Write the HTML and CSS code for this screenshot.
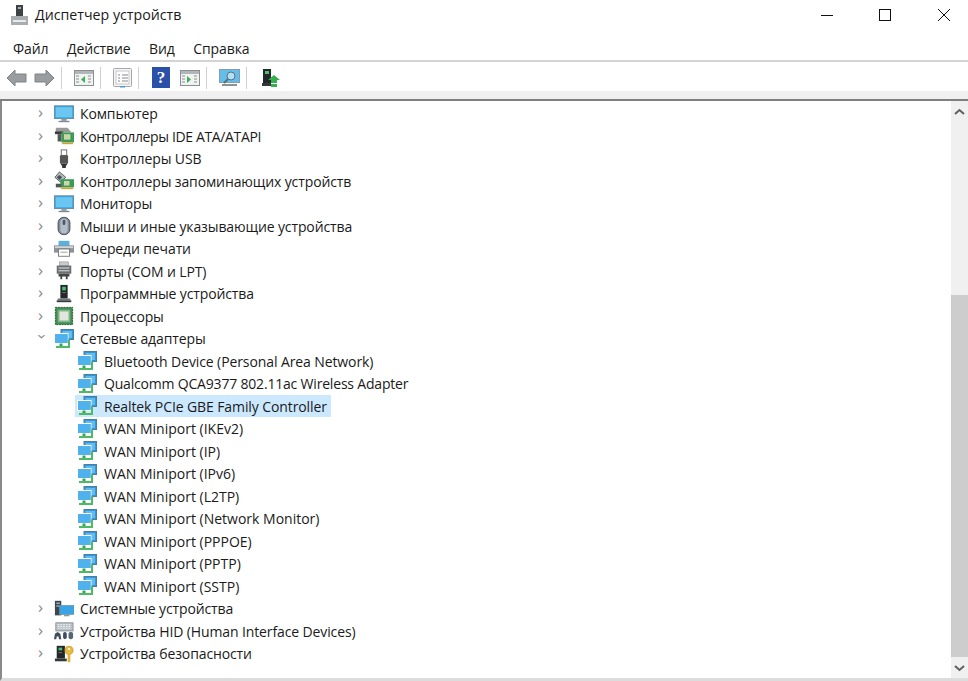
FILE: index.html
```html
<!DOCTYPE html>
<html lang="ru">
<head>
    <meta charset="UTF-8">
    <title>Диспетчер устройств</title>
    <link rel="stylesheet" href="styles.css">
</head>
<body>
    <svg class="sprite" width="0" height="0">
        <symbol id="i-monitor" viewBox="0 0 22 20">
            <rect x="0.5" y="1" width="21" height="14" fill="#35a8e8" stroke="#6d8797"/>
            <rect x="2" y="2.5" width="18" height="11" fill="#6cc6f2"/>
            <rect x="8" y="15" width="6" height="2.5" fill="#8b9aa3"/>
            <rect x="5" y="17.5" width="12" height="1.5" fill="#7b8a93"/>
        </symbol>
        <symbol id="i-ide" viewBox="0 0 22 20">
            <path d="M2 1h13l4 5H2z" fill="#9a9a9a"/>
            <rect x="1" y="5" width="9" height="3" fill="#3c3c3c"/>
            <rect x="8" y="6" width="14" height="11" fill="#3f9a5a"/>
            <rect x="11" y="8" width="7" height="6" fill="#c9d8a8"/>
            <rect x="9" y="17" width="12" height="2" fill="#c9a63a"/>
            <rect x="4" y="8" width="4" height="8" fill="#555"/>
        </symbol>
        <symbol id="i-usb" viewBox="0 0 22 20">
            <rect x="8" y="0" width="6" height="6" fill="#fff" stroke="#666"/>
            <rect x="6.5" y="6" width="9" height="9" rx="1" fill="#555"/>
            <path d="M7 15h8l-2 3v2H9v-2z" fill="#333"/>
        </symbol>
        <symbol id="i-storage" viewBox="0 0 22 20">
            <path d="M6 0l7 6-6 5-6-5z" fill="#b6bcc0" stroke="#555"/>
            <path d="M6 3.500l3 2.500-3 3-3-3z" fill="#4a5358"/>
            <rect x="7" y="8" width="15" height="9" fill="#3f9a5a"/>
            <rect x="11" y="10" width="6" height="5" fill="#c9d8a8"/>
            <rect x="2" y="13" width="6" height="4" fill="#555"/>
            <rect x="8" y="17" width="13" height="2" fill="#c9a63a"/>
        </symbol>
        <symbol id="i-mouse" viewBox="0 0 22 20">
            <rect x="4.500" y="0.500" width="13" height="19" rx="6" fill="#7f8d9a" stroke="#3e4952"/>
            <rect x="7" y="2" width="8" height="16" rx="4" fill="#b4bec7"/>
            <rect x="9.500" y="3" width="3" height="6" rx="1.500" fill="#4c5962"/>
        </symbol>
        <symbol id="i-printer" viewBox="0 0 22 20">
            <rect x="5" y="1" width="12" height="6" fill="#5bb1de"/>
            <rect x="0" y="6" width="22" height="8" fill="#8d9499"/>
            <rect x="1" y="7" width="20" height="2" fill="#d2d6d9"/>
            <rect x="5" y="10" width="12" height="8" fill="#fff" stroke="#777"/>
            <rect x="7" y="13" width="8" height="1" fill="#999"/>
        </symbol>
        <symbol id="i-port" viewBox="0 0 22 20">
            <rect x="6" y="0" width="10" height="4" fill="#c9cccf" stroke="#888" stroke-width="0.6"/>
            <rect x="3" y="4" width="16" height="9" fill="#6b6f73"/>
            <rect x="5" y="6" width="12" height="1.400" fill="#c6c8ca"/>
            <rect x="5" y="9" width="12" height="1.400" fill="#c6c8ca"/>
            <path d="M5 13h12v3h-2v3h-2v-3H9v3H7v-3H5z" fill="#444"/>
        </symbol>
        <symbol id="i-software" viewBox="0 0 22 20">
            <rect x="7" y="0" width="8" height="15" fill="#23272a"/>
            <rect x="9" y="2" width="4" height="4" fill="#49c06c"/>
            <rect x="9" y="8" width="4" height="1" fill="#777"/>
            <rect x="4" y="15" width="14" height="2" fill="#6c7276"/>
            <rect x="3" y="17" width="16" height="2" fill="#33383b"/>
        </symbol>
        <symbol id="i-cpu" viewBox="0 0 22 20">
            <rect x="1.500" y="0.500" width="19" height="19" fill="#3f8c4f" stroke="#23582f" stroke-dasharray="2 1"/>
            <rect x="4" y="3" width="14" height="14" fill="#7fb48a"/>
            <rect x="6" y="5" width="10" height="10" fill="#e2e6dd"/>
        </symbol>
        <symbol id="i-network" viewBox="0 0 20 20">
            <rect x="7" y="0.500" width="12.500" height="10" fill="#2f97dc" stroke="#4b7f9f"/>
            <rect x="8.500" y="2" width="9.500" height="7" fill="#62bdee"/>
            <rect x="0.500" y="4.500" width="13.500" height="10" fill="#2f97dc" stroke="#fff"/>
            <rect x="1" y="5" width="12.500" height="9" fill="#4fb2ec"/>
            <rect x="5.500" y="14.500" width="3" height="2.500" fill="#3aa655"/>
            <rect x="2" y="17" width="14" height="2" fill="#4dbb63"/>
            <rect x="14" y="10.500" width="2" height="6.500" fill="#4dbb63"/>
        </symbol>
        <symbol id="i-system" viewBox="0 0 22 20">
            <rect x="1" y="1" width="7" height="16" fill="#3f474c"/>
            <rect x="2.500" y="3" width="4" height="1.500" fill="#9fb0ba"/>
            <rect x="2.500" y="6" width="4" height="1.500" fill="#9fb0ba"/>
            <rect x="6" y="6" width="16" height="10" fill="#39a5e6" stroke="#708da0" stroke-width="0.7"/>
            <rect x="11" y="16" width="6" height="2" fill="#8b9aa3"/>
        </symbol>
        <symbol id="i-hid" viewBox="0 0 22 20">
            <rect x="2" y="1" width="19" height="9" fill="#b9c0c6" stroke="#6d747a" stroke-width="0.7"/>
            <path d="M4 3h15M4 5h15M4 7h15" stroke="#f2f4f5" stroke-width="1" stroke-dasharray="2 1"/>
            <path d="M0 19l1-6 3-2 3 2 1 6H5.500l-.5-3H3l-.5 3z" fill="#3d4d63"/>
            <rect x="10" y="11" width="4" height="8" rx="2" fill="#3d4d63"/>
            <rect x="16" y="11" width="5" height="8" rx="2" fill="#596473"/>
        </symbol>
        <symbol id="i-security" viewBox="0 0 22 20">
            <rect x="3" y="1" width="9" height="14" fill="#23272a"/>
            <rect x="5" y="3" width="4" height="3" fill="#49c06c"/>
            <rect x="5" y="8" width="4" height="1" fill="#777"/>
            <rect x="1" y="15" width="13" height="3" fill="#33383b"/>
            <circle cx="16.500" cy="6" r="4.500" fill="#e6b93f" stroke="#b78d22" stroke-width="0.7"/>
            <circle cx="16.500" cy="4.500" r="1.200" fill="#fff"/>
            <rect x="15" y="10" width="3" height="9" fill="#e0b33c"/>
        </symbol>
    </svg>

    <div class="titlebar">
        <svg class="app-icon" width="17" height="20" viewBox="0 0 17 20">
            <rect x="5" y="0" width="7" height="11" fill="#3d4346"/>
            <rect x="7" y="2" width="3" height="2" fill="#a8b0b4"/>
            <rect x="0" y="11" width="17" height="9" fill="#a9adaf"/>
            <rect x="2" y="15" width="13" height="2" fill="#e8e9ea"/>
        </svg>
        <span class="app-title">Диспетчер устройств</span>
        <div class="window-controls">
            <svg width="14" height="14" viewBox="0 0 14 14"><path d="M0 7.500h12" stroke="#111"/></svg>
            <svg width="14" height="14" viewBox="0 0 14 14"><rect x="0.500" y="1.500" width="11" height="11" fill="none" stroke="#111"/></svg>
            <svg width="14" height="14" viewBox="0 0 14 14"><path d="M1 1l12 12M13 1L1 13" stroke="#111"/></svg>
        </div>
    </div>

    <div class="menubar">
        <span>Файл</span>
        <span>Действие</span>
        <span>Вид</span>
        <span>Справка</span>
    </div>

    <div class="toolbar">
        <svg class="tool tool-arrow" width="21" height="18" viewBox="0 0 21 18"><path d="M1 9l8-8v4h11v8H9v4z" fill="#9a9d9f" stroke="#808284"/></svg>
        <svg class="tool tool-arrow" width="21" height="18" viewBox="0 0 21 18"><path d="M20 9l-8-8v4H1v8h11v4z" fill="#9a9d9f" stroke="#808284"/></svg>
        <i class="tool-sep"></i>
        <svg class="tool" width="20" height="18" viewBox="0 0 20 18">
            <rect x="0.500" y="1.500" width="19" height="15" fill="#f1f2f2" stroke="#8c8f91"/>
            <rect x="1" y="2" width="18" height="3" fill="#b3b6b8"/>
            <path d="M11 7v7l-4-3.500z" fill="#3fae5b"/>
            <path d="M2 7h3M2 10h3M2 13h3M14 7h3M14 10h3M14 13h3" stroke="#8c8f91"/>
        </svg>
        <i class="tool-sep"></i>
        <svg class="tool" width="19" height="20" viewBox="0 0 19 20">
            <rect x="0.500" y="0.500" width="18" height="18" rx="1" fill="#f6f6f6" stroke="#a3a5a7"/>
            <rect x="3" y="3" width="13" height="13" fill="#fff" stroke="#c4c6c8"/>
            <path d="M5 7h2M9 7h6M5 10h2M9 10h6M5 13h2M9 13h6" stroke="#85888b"/>
            <rect x="7" y="18" width="5" height="1.500" fill="#4a9ad4"/>
        </svg>
        <i class="tool-sep"></i>
        <div class="tool help-icon">?</div>
        <svg class="tool" width="20" height="18" viewBox="0 0 20 18">
            <rect x="0.500" y="1.500" width="19" height="15" fill="#f1f2f2" stroke="#8c8f91"/>
            <rect x="1" y="2" width="18" height="3" fill="#b3b6b8"/>
            <path d="M7 7v7l4-3.500z" fill="#3fae5b"/>
            <path d="M2 7h3M2 10h3M2 13h3M14 7h3M14 10h3M14 13h3" stroke="#8c8f91"/>
        </svg>
        <i class="tool-sep"></i>
        <svg class="tool" width="21" height="20" viewBox="0 0 21 20">
            <rect x="0.500" y="1.500" width="20" height="13" fill="#67bdea" stroke="#7f9fb2"/>
            <circle cx="12" cy="8" r="4" fill="#b5dff5" stroke="#55727f"/>
            <path d="M9 11l-4 4" stroke="#55727f" stroke-width="2"/>
            <path d="M3 17h15" stroke="#8f9294" stroke-width="2"/>
        </svg>
        <i class="tool-sep last"></i>
        <svg class="tool" width="18" height="20" viewBox="0 0 18 20">
            <rect x="1" y="1" width="8" height="14" fill="#23272a"/>
            <rect x="3" y="3" width="4" height="3" fill="#49c06c"/>
            <rect x="0" y="15" width="9" height="3" fill="#33383b"/>
            <path d="M12 7l6 5h-3v3H9v-3H6z" fill="#35b04f"/>
            <rect x="9" y="16" width="6" height="3" fill="#35b04f"/>
        </svg>
    </div>

    <div class="toolbar-gap"></div>

    <div class="main">
        <div class="tree">
            <div class="row"><span class="chevron">›</span><svg class="icon"><use href="#i-monitor"/></svg><span>Компьютер</span></div>
            <div class="row tightest"><span class="chevron">›</span><svg class="icon"><use href="#i-ide"/></svg><span>Контроллеры IDE ATA/ATAPI</span></div>
            <div class="row"><span class="chevron">›</span><svg class="icon"><use href="#i-usb"/></svg><span>Контроллеры USB</span></div>
            <div class="row"><span class="chevron">›</span><svg class="icon"><use href="#i-storage"/></svg><span>Контроллеры запоминающих устройств</span></div>
            <div class="row"><span class="chevron">›</span><svg class="icon"><use href="#i-monitor"/></svg><span>Мониторы</span></div>
            <div class="row"><span class="chevron">›</span><svg class="icon"><use href="#i-mouse"/></svg><span>Мыши и иные указывающие устройства</span></div>
            <div class="row"><span class="chevron">›</span><svg class="icon"><use href="#i-printer"/></svg><span>Очереди печати</span></div>
            <div class="row"><span class="chevron">›</span><svg class="icon"><use href="#i-port"/></svg><span>Порты (COM и LPT)</span></div>
            <div class="row"><span class="chevron">›</span><svg class="icon"><use href="#i-software"/></svg><span>Программные устройства</span></div>
            <div class="row"><span class="chevron">›</span><svg class="icon"><use href="#i-cpu"/></svg><span>Процессоры</span></div>
            <div class="row"><span class="chevron open">›</span><svg class="icon"><use href="#i-network"/></svg><span>Сетевые адаптеры</span></div>
            <div class="row child tight"><svg class="icon"><use href="#i-network"/></svg><span>Bluetooth Device (Personal Area Network)</span></div>
            <div class="row child tighter"><svg class="icon"><use href="#i-network"/></svg><span>Qualcomm QCA9377 802.11ac Wireless Adapter</span></div>
            <div class="row child tight"><div class="selected"><svg class="icon"><use href="#i-network"/></svg><span>Realtek PCIe GBE Family Controller</span></div></div>
            <div class="row child"><svg class="icon"><use href="#i-network"/></svg><span>WAN Miniport (IKEv2)</span></div>
            <div class="row child"><svg class="icon"><use href="#i-network"/></svg><span>WAN Miniport (IP)</span></div>
            <div class="row child"><svg class="icon"><use href="#i-network"/></svg><span>WAN Miniport (IPv6)</span></div>
            <div class="row child"><svg class="icon"><use href="#i-network"/></svg><span>WAN Miniport (L2TP)</span></div>
            <div class="row child"><svg class="icon"><use href="#i-network"/></svg><span>WAN Miniport (Network Monitor)</span></div>
            <div class="row child"><svg class="icon"><use href="#i-network"/></svg><span>WAN Miniport (PPPOE)</span></div>
            <div class="row child"><svg class="icon"><use href="#i-network"/></svg><span>WAN Miniport (PPTP)</span></div>
            <div class="row child"><svg class="icon"><use href="#i-network"/></svg><span>WAN Miniport (SSTP)</span></div>
            <div class="row"><span class="chevron">›</span><svg class="icon"><use href="#i-system"/></svg><span>Системные устройства</span></div>
            <div class="row"><span class="chevron">›</span><svg class="icon"><use href="#i-hid"/></svg><span>Устройства HID (Human Interface Devices)</span></div>
            <div class="row"><span class="chevron">›</span><svg class="icon"><use href="#i-security"/></svg><span>Устройства безопасности</span></div>
        </div>
        <div class="scrollbar">
            <svg class="scroll-arrow" width="17" height="22" viewBox="0 0 17 22"><path d="M4 13l4.500-4 4.500 4" fill="none" stroke="#606060" stroke-width="2"/></svg>
            <div class="scroll-track"></div>
            <div class="scroll-thumb"></div>
            <svg class="scroll-arrow" width="17" height="21" viewBox="0 0 17 21"><path d="M4 9l4.500 4 4.500-4" fill="none" stroke="#606060" stroke-width="2"/></svg>
        </div>
    </div>
</body>
</html>
```
FILE: styles.css
```css
html, body {
    margin: 0;
    padding: 0;
    height: 681px;
    overflow: hidden;
}
body {
    font-family: "Open Sans", "Noto Sans", sans-serif;
    color: #1a1a1a;
    background-color: #fff;
    display: flex;
    flex-direction: column;
}
.sprite {
    position: absolute;
}
.titlebar {
    height: 31px;
    box-sizing: border-box;
    padding: 0 0 2px 11px;
    display: flex;
    align-items: center;
}
.app-title {
    font-size: 14.200px;
    margin-left: 7px;
}
.window-controls {
    margin-left: auto;
    display: flex;
    gap: 44px;
    padding-right: 17px;
}
.menubar {
    height: 31px;
    box-sizing: border-box;
    padding: 5px 0 0 13px;
    display: flex;
    gap: 18.500px;
    font-size: 14px;
    letter-spacing: -0.100px;
    line-height: 26px;
    border-bottom: 2px solid #d4d4d4;
}
.toolbar {
    height: 29px;
    padding: 2px 0 0 6px;
    box-sizing: border-box;
    display: flex;
    align-items: center;
}
.tool-arrow + .tool-arrow {
    margin-left: 7px;
}
.tool-sep {
    width: 1px;
    height: 22px;
    background-color: #d0d0d0;
    margin: 0 12px 0 6px;
}
.tool-sep.last {
    margin-right: 15px;
}
.help-icon {
    width: 18px;
    height: 21px;
    margin-left: 1px;
    background-color: #2b50a8;
    color: #fff;
    font-family: "Liberation Serif", serif;
    font-weight: bold;
    font-size: 17px;
    line-height: 21px;
    text-align: center;
    margin-right: 10px;
}
.toolbar-gap {
    height: 8px;
    background-color: #f0f0f0;
    border-bottom: 2px solid #7f7f7f;
}
.main {
    flex: 1;
    display: flex;
    min-height: 0;
    border-left: 2px solid #8a8a8a;
    border-bottom: 3px solid #dcdcdc;
}
.tree {
    flex: 1;
    padding-top: 1.500px;
    font-size: 14px;
    letter-spacing: -0.120px;
}
.row {
    height: 22.500px;
    display: flex;
    align-items: center;
    padding-left: 36px;
    white-space: nowrap;
}
.row.child {
    padding-left: 73px;
    letter-spacing: 0;
}
.row.child > .icon {
    margin-left: 2px;
    margin-right: 7px;
}
.row.tight {
    letter-spacing: -0.100px;
}
.row.tighter {
    letter-spacing: -0.190px;
}
.row.tightest {
    letter-spacing: -0.360px;
}
.chevron {
    width: 16px;
    color: #8a8a8a;
    font-size: 17px;
    line-height: 18px;
    margin-top: -3px;
}
.chevron.open {
    transform: translateX(-2px) rotate(90deg);
    transform-origin: 5px 11px;
}
.icon {
    width: 20px;
    height: 20px;
    margin-right: 6px;
    flex: none;
}
.selected {
    display: flex;
    align-items: center;
    background-color: #cce8ff;
    height: 22px;
    padding: 0 4px 0 2px;
}
.selected .icon {
    margin-right: 7px;
}
.scrollbar {
    width: 17px;
    background-color: #f0f0f0;
    display: flex;
    flex-direction: column;
}
.scroll-arrow {
    flex: none;
}
.scroll-track {
    height: 172px;
}
.scroll-thumb {
    flex: 1;
    background-color: #cdcdcd;
}
```
